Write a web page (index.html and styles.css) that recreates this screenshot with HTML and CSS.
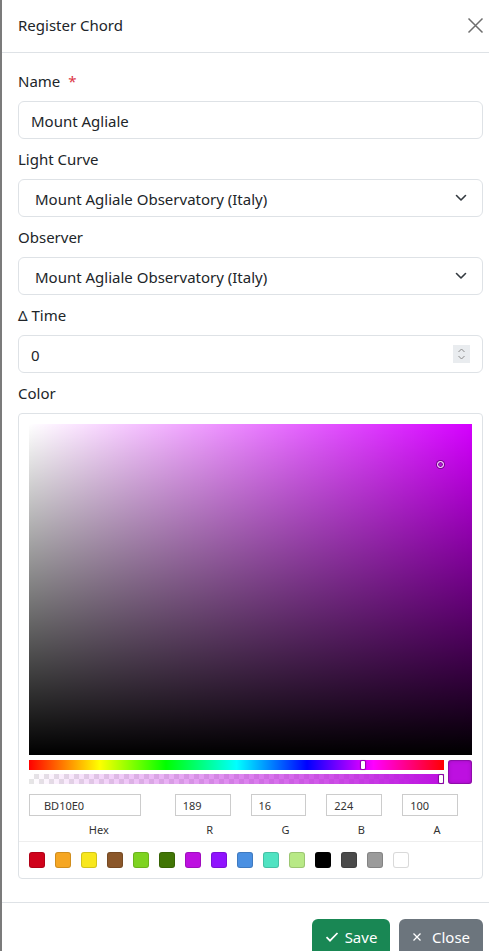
FILE: index.html
```html
<!DOCTYPE html>
<html lang="en">
<head>
<meta charset="utf-8">
<title>Register Chord</title>
<link rel="stylesheet" href="styles.css">
</head>
<body>
<div class="modal">
  <div class="modal-header">
    <h5 class="modal-title">Register Chord</h5>
    <button class="btn-close" type="button" aria-label="Close">
      <svg width="17" height="17" viewBox="0 0 17 17"><path d="M1.5 1.5L15.5 15.5M15.5 1.5L1.5 15.5" stroke="#6e6e6e" stroke-width="1.5" fill="none"/></svg>
    </button>
  </div>
  <div class="modal-body">
    <div class="field">
      <label class="form-label">Name <span class="req">*</span></label>
      <input class="form-control" type="text" value="Mount Agliale">
    </div>
    <div class="field">
      <label class="form-label">Light Curve</label>
      <div class="select-wrap">
        <select class="form-select"><option>Mount Agliale Observatory (Italy)</option></select>
        <svg class="chev" width="12" height="8" viewBox="0 0 12 8"><path d="M1.5 1.5L6 6L10.5 1.5" stroke="#343a40" stroke-width="1.6" fill="none" stroke-linecap="round" stroke-linejoin="round"/></svg>
      </div>
    </div>
    <div class="field">
      <label class="form-label">Observer</label>
      <div class="select-wrap">
        <select class="form-select"><option>Mount Agliale Observatory (Italy)</option></select>
        <svg class="chev" width="12" height="8" viewBox="0 0 12 8"><path d="M1.5 1.5L6 6L10.5 1.5" stroke="#343a40" stroke-width="1.6" fill="none" stroke-linecap="round" stroke-linejoin="round"/></svg>
      </div>
    </div>
    <div class="field">
      <label class="form-label">Δ Time</label>
      <div class="number-wrap">
        <input class="number-input" type="text" value="0">
        <span class="spin">
          <svg width="9" height="14" viewBox="0 0 9 14"><path d="M1.5 5L4.5 2L7.5 5M1.5 9L4.5 12L7.5 9" stroke="#8a8a8a" stroke-width="1" fill="none"/></svg>
        </span>
      </div>
    </div>
    <div class="field field-last">
      <label class="form-label">Color</label>
      <div class="picker">
        <div class="saturation">
          <span class="sat-pointer"></span>
        </div>
        <div class="controls">
          <div class="sliders">
            <div class="hue"><span class="hue-pointer"></span></div>
            <div class="alpha"><span class="alpha-pointer"></span></div>
          </div>
          <div class="preview"></div>
        </div>
        <div class="fields">
          <div class="fld fld-hex"><input class="fld-input" value="BD10E0"><span class="fld-label">Hex</span></div>
          <div class="fld"><input class="fld-input" value="189"><span class="fld-label">R</span></div>
          <div class="fld"><input class="fld-input" value="16"><span class="fld-label">G</span></div>
          <div class="fld"><input class="fld-input" value="224"><span class="fld-label">B</span></div>
          <div class="fld"><input class="fld-input" value="100"><span class="fld-label">A</span></div>
        </div>
        <div class="presets">
          <span class="sw" style="background:#D0021B"></span>
          <span class="sw" style="background:#F5A623"></span>
          <span class="sw" style="background:#F8E71C"></span>
          <span class="sw" style="background:#8B572A"></span>
          <span class="sw" style="background:#7ED321"></span>
          <span class="sw" style="background:#417505"></span>
          <span class="sw" style="background:#BD10E0"></span>
          <span class="sw" style="background:#9013FE"></span>
          <span class="sw" style="background:#4A90E2"></span>
          <span class="sw" style="background:#50E3C2"></span>
          <span class="sw" style="background:#B8E986"></span>
          <span class="sw" style="background:#000000"></span>
          <span class="sw" style="background:#4A4A4A"></span>
          <span class="sw" style="background:#9B9B9B"></span>
          <span class="sw" style="background:#FFFFFF"></span>
        </div>
      </div>
    </div>
  </div>
  <div class="modal-footer">
    <button class="btn btn-save" type="button">
      <svg width="14" height="12" viewBox="0 0 14 12"><path d="M1.5 6.2L5 9.7L12.5 2" stroke="#fff" stroke-width="1.7" fill="none"/></svg>
      Save
    </button>
    <button class="btn btn-close-footer" type="button">
      <svg width="10" height="10" viewBox="0 0 10 10"><path d="M1.5 1.5L8.5 8.5M8.5 1.5L1.5 8.5" stroke="#fff" stroke-width="1.3" fill="none"/></svg>
      Close
    </button>
  </div>
</div>
</body>
</html>
```
FILE: styles.css
```css
* { box-sizing: border-box; }
html, body { margin: 0; padding: 0; }
body {
  background: #7b7b7b;
  overflow: hidden;
  width: 489px;
  height: 951px;
  font-family: "Noto Sans", "Open Sans", sans-serif;
  color: #212529;
  font-size: 15px;
}
.modal {
  margin-left: 2px;
  width: 497px;
  min-height: 960px;
  background: #fff;
}
.modal-header {
  height: 53px;
  border-bottom: 1px solid #dee2e6;
  display: flex;
  align-items: center;
  justify-content: space-between;
  padding: 0 15px 0 16px;
}
.modal-title {
  margin: 0;
  font-size: 15px;
  font-weight: 400;
  line-height: 24px;
  padding-bottom: 2px;
}
.btn-close {
  border: 0;
  background: transparent;
  padding: 0;
  margin: 0 0 2px 0;
  width: 17px;
  height: 17px;
  display: flex;
}
.modal-body {
  padding: 16px 16px 23px;
}
.field { margin-bottom: 8px; }
.field-last { margin-bottom: 0; }
.form-label {
  display: block;
  line-height: 24px;
  margin-bottom: 8px;
  font-size: 15px;
}
.req { color: #dc3545; margin-left: 4px; }
.form-control, .form-select, .number-wrap {
  display: block;
  width: 100%;
  height: 38px;
  margin: 0;
  border: 1px solid #dee2e6;
  border-radius: 6px;
  font-family: inherit;
  font-size: 15px;
  color: #212529;
  background: #fff;
}
.form-control { padding: 2px 12px 0; }
.select-wrap { position: relative; }
.form-select {
  appearance: none;
  -webkit-appearance: none;
  padding: 1px 40px 0 16px;
}
.chev {
  position: absolute;
  right: 16px;
  top: 15px;
}
.number-wrap {
  display: flex;
  align-items: center;
  padding: 0 12px 0 12px;
}
.number-input {
  flex: 1;
  border: 0;
  outline: none;
  font-family: inherit;
  font-size: 15px;
  color: #212529;
  padding: 1px 0 0;
  min-width: 0;
}
.spin {
  width: 17px;
  height: 18px;
  background: #e9ecef;
  display: flex;
  align-items: center;
  justify-content: center;
}
.picker {
  border: 1px solid #dee2e6;
  border-radius: 4px;
  padding: 10px 10px 0;
}
.saturation {
  position: relative;
  height: 331px;
  background:
    linear-gradient(to top, #000, rgba(0,0,0,0)),
    linear-gradient(to right, #fff, rgba(255,255,255,0)),
    hsl(290, 100%, 50%);
}
.sat-pointer {
  position: absolute;
  left: 408px;
  top: 37px;
  width: 7px;
  height: 7px;
  border-radius: 50%;
  border: 1.5px solid #fff;
  box-shadow: 0 0 0 1px rgba(0,0,0,0.4), inset 0 0 1px 1px rgba(0,0,0,0.3);
}
.controls {
  display: flex;
  gap: 4px;
  margin-top: 5px;
}
.sliders { flex: 1; display: flex; flex-direction: column; gap: 4px; }
.hue, .alpha { position: relative; height: 10px; }
.hue {
  background: linear-gradient(to right, #f00 0%, #ff0 17%, #0f0 33%, #0ff 50%, #00f 67%, #f0f 83%, #f00 100%);
}
.alpha {
  background:
    linear-gradient(to right, rgba(189,16,224,0), rgb(189,16,224)),
    repeating-conic-gradient(#e6e6e6 0% 25%, #fff 0% 50%) 0 0 / 10px 10px;
}
.hue-pointer, .alpha-pointer {
  position: absolute;
  top: 1px;
  width: 4px;
  height: 8px;
  background: #fff;
  border-radius: 1px;
  box-shadow: 0 0 1px 1px rgba(0,0,0,0.35);
}
.hue-pointer { left: 332px; }
.alpha-pointer { left: 410px; }
.preview {
  width: 24px;
  height: 24px;
  border-radius: 3px;
  background: #bd10e0;
  box-shadow: inset 0 0 0 1px rgba(0,0,0,0.15), inset 0 0 4px rgba(0,0,0,0.25);
}
.fields {
  display: flex;
  gap: 6px;
  margin-top: 10px;
}
.fld { flex: 1; display: flex; flex-direction: column; }
.fld-hex { flex: 2; }
.fld-input {
  display: block;
  width: 80%;
  height: 22px;
  margin: 0;
  border: 1px solid #ccc;
  box-shadow: none;
  padding: 0 0 0 10%;
  font-family: inherit;
  font-size: 11px;
  color: #333;
  outline: none;
}
.fld-label {
  text-align: center;
  font-size: 11px;
  color: #333;
  line-height: 16px;
  margin-top: 6px;
}
.presets {
  display: flex;
  gap: 10px;
  margin: 3px -10px 0;
  padding: 10px 10px 10px;
  border-top: 1px solid #eee;
}
.sw {
  width: 16px;
  height: 16px;
  border-radius: 3px;
  box-shadow: inset 0 0 0 1px rgba(0,0,0,0.15);
}
.modal-footer {
  border-top: 1px solid #dee2e6;
  display: flex;
  justify-content: flex-end;
  padding: 12px 12px;
}
.btn {
  margin: 4px;
  height: 38px;
  border: 0;
  border-radius: 6px;
  color: #fff;
  font-family: inherit;
  font-size: 15px;
  display: flex;
  align-items: center;
  justify-content: center;
  gap: 6px;
  padding: 0 0 2px;
}
.btn-save { background: #198754; width: 78px; margin-right: 5px; }
.btn-close-footer { background: #6c757d; width: 84px; gap: 10px; }
```
